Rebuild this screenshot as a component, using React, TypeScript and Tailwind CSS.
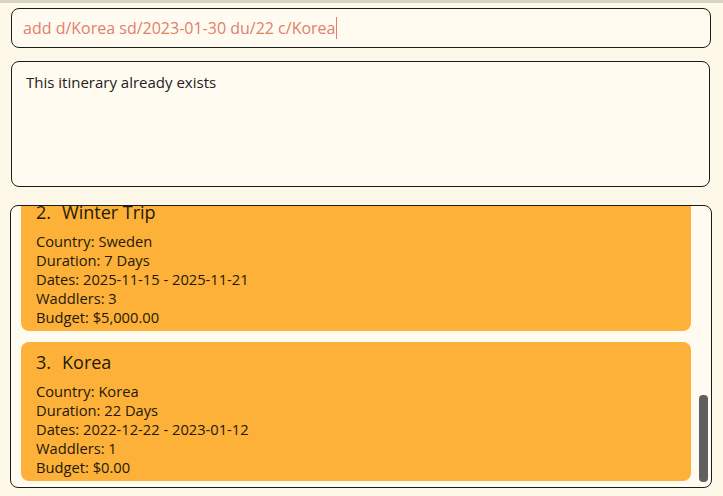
import React from "react";

const cards = [
  {
    idx: 2,
    name: "Winter Trip",
    country: "Sweden",
    duration: "7 Days",
    dates: "2025-11-15 - 2025-11-21",
    waddlers: "3",
    budget: "$5,000.00",
  },
  {
    idx: 3,
    name: "Korea",
    country: "Korea",
    duration: "22 Days",
    dates: "2022-12-22 - 2023-01-12",
    waddlers: "1",
    budget: "$0.00",
  },
];

function Card({ c }: { c: (typeof cards)[number] }) {
  return (
    <div className="rounded-[8px] bg-[#fdb138] pl-[15px] pt-[8px] pb-[4px] text-[#22190c]">
      <div className="flex h-[24px] items-center text-[18px] leading-[24px]">
        <span>{c.idx}.</span>
        <span className="ml-[11px]">{c.name}</span>
      </div>
      <div className="mt-[8px] text-[14.7px] leading-[19px]">
        <div>Country: {c.country}</div>
        <div>Duration: {c.duration}</div>
        <div>Dates: {c.dates}</div>
        <div>Waddlers: {c.waddlers}</div>
        <div>Budget: {c.budget}</div>
      </div>
    </div>
  );
}

export default function App() {
  return (
    <div
      className="flex h-[496px] w-[723px] flex-col bg-[#fef8e9]"
      style={{ fontFamily: '"Open Sans", "Noto Sans", sans-serif' }}
    >
      <div className="h-[3px] bg-[#d8d3c3]" />
      <div className="ml-[11px] mr-[12px] mt-[5px] flex h-[40px] items-center rounded-[8px] border border-[#1c1c1c] bg-[#fffbf0] pl-[11px]">
        <span className="text-[16px] leading-[20px] text-[#e0806c]">
          add d/Korea sd/2023-01-30 du/22 c/Korea
        </span>
        <span className="ml-[1px] h-[22px] w-[1px] bg-[#e0806c]" />
      </div>
      <div className="ml-[11px] mr-[13px] mt-[13px] h-[126px] rounded-[8px] border border-[#1c1c1c] bg-[#fffbf0] pl-[14px] pt-[8px]">
        <span className="text-[15px] leading-[20px] text-[#222]">
          This itinerary already exists
        </span>
      </div>
      <div className="relative ml-[10px] mr-[11px] mt-[18px] h-[283px] overflow-hidden rounded-[8px] border border-[#1c1c1c] bg-[#fffbf0]">
        <div className="mt-[-14px] flex flex-col gap-[11px] pl-[10px] pr-[20px]">
          {cards.map((c) => (
            <Card key={c.idx} c={c} />
          ))}
        </div>
        <div className="absolute right-[3px] top-[189px] h-[87px] w-[9px] rounded-[4px] bg-[#606060]" />
      </div>
    </div>
  );
}
